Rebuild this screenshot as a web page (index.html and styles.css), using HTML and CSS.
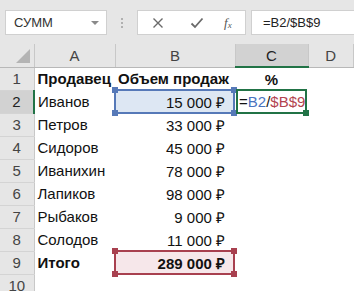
FILE: index.html
```html
<!DOCTYPE html>
<html lang="ru">
<head>
<meta charset="UTF-8">
<title>Excel</title>
<link rel="stylesheet" href="styles.css">
</head>
<body>
  <div class="bar">
    <div class="namebox">
      <span>СУММ</span>
      <span class="caret"></span>
    </div>
    <div class="dots"><i></i><i></i><i></i></div>
    <div class="tools">
      <svg class="ico" width="12" height="12" viewBox="0 0 12 12"><path d="M1.5 1.5L10.5 10.5M10.5 1.5L1.5 10.5" stroke="#6a6a6a" stroke-width="1.4" fill="none"/></svg>
      <svg class="ico" width="14" height="12" viewBox="0 0 14 12"><path d="M1.5 6.5L5 10L12.5 1.5" stroke="#6a6a6a" stroke-width="1.8" fill="none"/></svg>
      <span class="fx">f<sub>x</sub></span>
    </div>
    <div class="formula">=B2/$B$9</div>
  </div>

  <table class="sheet">
    <colgroup>
      <col class="c-rh"><col class="c-a"><col class="c-b"><col class="c-c"><col>
    </colgroup>
    <tr class="hdr">
      <th class="corner"><span class="tri"></span></th>
      <th>A</th><th>B</th><th class="on">C</th><th>D</th>
    </tr>
    <tr><th>1</th><td class="b">Продавец</td><td class="b">Объем продаж</td><td class="b mid">%</td><td></td></tr>
    <tr><th class="on">2</th><td>Иванов</td><td class="num sel-blue">15 000 ₽<span class="frame blue"><i class="h tl"></i><i class="h tr"></i><i class="h bl"></i><i class="h br"></i></span></td><td class="edit"><span class="k">=</span><span class="ref1">B2</span><span class="k">/</span><span class="ref2">$B$9</span><span class="frame green"><i class="h br"></i></span></td><td></td></tr>
    <tr><th>3</th><td>Петров</td><td class="num">33 000 ₽</td><td></td><td></td></tr>
    <tr><th>4</th><td>Сидоров</td><td class="num">45 000 ₽</td><td></td><td></td></tr>
    <tr><th>5</th><td>Иванихин</td><td class="num">78 000 ₽</td><td></td><td></td></tr>
    <tr><th>6</th><td>Лапиков</td><td class="num">98 000 ₽</td><td></td><td></td></tr>
    <tr><th>7</th><td>Рыбаков</td><td class="num">9 000 ₽</td><td></td><td></td></tr>
    <tr><th>8</th><td>Солодов</td><td class="num">11 000 ₽</td><td></td><td></td></tr>
    <tr><th>9</th><td class="b">Итого</td><td class="num b sel-red">289 000 ₽<span class="frame red"><i class="h tl"></i><i class="h tr"></i><i class="h bl"></i><i class="h br"></i></span></td><td></td><td></td></tr>
    <tr><th>10</th><td></td><td></td><td></td><td></td></tr>
  </table>
</body>
</html>
```

FILE: styles.css
```css
body {
  margin: 0;
  width: 354px;
  height: 291px;
  overflow: hidden;
  background: #fff;
  font-family: "Liberation Sans", Arial, sans-serif;
}
.bar {
  height: 44px;
  background: #e6e6e6;
  display: flex;
  align-items: center;
  box-sizing: border-box;
  padding: 1px 0 0 5px;
}
.namebox {
  width: 102px;
  height: 25px;
  box-sizing: border-box;
  background: #fff;
  border: 1px solid #d0d0d0;
  display: flex;
  align-items: center;
  justify-content: space-between;
  padding: 0 7px 0 8px;
  font-size: 13px;
  color: #333;
}
.caret {
  width: 0;
  height: 0;
  border-left: 4px solid transparent;
  border-right: 4px solid transparent;
  border-top: 4px solid #8a8a8a;
}
.dots {
  width: 30px;
  display: flex;
  flex-direction: column;
  align-items: center;
  gap: 2px;
}
.dots i {
  width: 2px;
  height: 2px;
  background: #b0b0b0;
}
.tools {
  width: 109px;
  height: 25px;
  box-sizing: border-box;
  background: #fff;
  border: 1px solid #d0d0d0;
  display: flex;
  align-items: center;
  padding-left: 14px;
  gap: 0;
}
.tools .ico:first-child { margin-right: 26px; }
.tools .ico:nth-child(2) { margin-right: 20px; }
.fx {
  font-family: "Liberation Serif", serif;
  font-style: italic;
  font-size: 13px;
  color: #555;
}
.fx sub {
  font-size: 9px;
  vertical-align: -1px;
}
.formula {
  flex: 1;
  height: 25px;
  margin-left: 5px;
  box-sizing: border-box;
  background: #fff;
  border: 1px solid #d0d0d0;
  border-right: 0;
  display: flex;
  align-items: center;
  padding-left: 11px;
  font-size: 13px;
  color: #222;
}

.sheet {
  border-collapse: collapse;
  table-layout: fixed;
  width: 354px;
  font-size: 15px;
  color: #111;
}
.c-rh { width: 34px; }
.c-a { width: 81px; }
.c-b { width: 120px; }
.c-c { width: 73px; }
.sheet tr { height: 23px; }
.sheet th {
  background: #e6e6e6;
  font-weight: normal;
  color: #444;
  padding: 0;
  border-right: 1px solid #c8c8c8;
  border-bottom: 1px solid #d4d4d4;
}
.hdr th {
  border-right: 1px solid #c8c8c8;
  border-bottom: 1px solid #b8b8b8;
  font-size: 15px;
}
.sheet th.on {
  background: #d2d2d2;
  color: #222;
}
.hdr th.on { border-bottom: 2px solid #217346; }
tr th.on:first-child { border-right: 2px solid #217346; }
.corner { position: relative; }
.tri {
  position: absolute;
  right: 4px;
  bottom: 4px;
  width: 0;
  height: 0;
  border-left: 14px solid transparent;
  border-bottom: 14px solid #b4b4b4;
}
.sheet td {
  padding: 0 3px;
  white-space: nowrap;
  overflow: visible;
  position: relative;
}
.b { font-weight: bold; }
.mid { text-align: center; }
.num { text-align: right; padding-right: 10px !important; }
.sel-blue { background: #dde7f3; }
.sel-red { background: #f6e7ea; }
.edit { padding-left: 4px !important; }
.k { color: #111; }
.ref1 { color: #4a74c0; }
.ref2 { color: #b2434f; }
.frame {
  position: absolute;
  left: -1px;
  top: -1px;
  right: 0;
  bottom: -1px;
  border: 2px solid;
}
.frame.blue { border-color: #5679b8; }
.frame.red { border-color: #a8404f; }
.frame.green { border-color: #217346; left: 1px; right: 1px; }
.h {
  position: absolute;
  width: 6px;
  height: 6px;
  background: inherit;
}
.blue .h { background: #5679b8; }
.red .h { background: #a8404f; }
.green .h { background: #217346; }
.tl { left: -4px; top: -4px; }
.tr { right: -4px; top: -4px; }
.bl { left: -4px; bottom: -4px; }
.br { right: -4px; bottom: -4px; }
```
